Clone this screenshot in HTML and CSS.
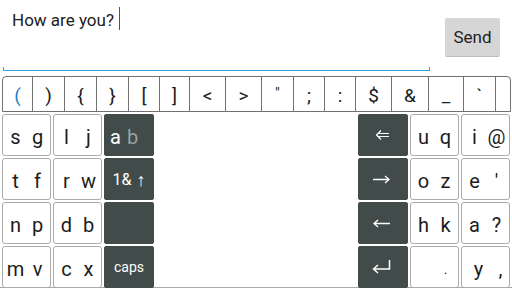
FILE: index.html
```html
<!DOCTYPE html>
<html>
<head>
<meta charset="utf-8">
<link rel="stylesheet" href="styles.css">
</head>
<body>
<div class="top">
  <div class="field">
    <div class="line"><span class="text">How are you?</span><span class="caret"></span></div>
    <div class="spacer"></div>
    <div class="underline"></div>
  </div>
  <button class="send">Send</button>
</div>
<div class="symbols">
  <div class="sym w30 blue">(</div>
  <div class="sym w32">)</div>
  <div class="sym w32">{</div>
  <div class="sym w32">}</div>
  <div class="sym w31">[</div>
  <div class="sym w30">]</div>
  <div class="sym w36">&lt;</div>
  <div class="sym w36">&gt;</div>
  <div class="sym w32 small">"</div>
  <div class="sym w31">;</div>
  <div class="sym w31">:</div>
  <div class="sym w36">$</div>
  <div class="sym w37">&amp;</div>
  <div class="sym w35">_</div>
  <div class="sym w32">`</div>
  <div class="sym last"></div>
</div>
<div class="keys">
  <div class="key"><span>s</span><span>g</span></div>
  <div class="key"><span>l</span><span>j</span></div>
  <div class="key dark tight"><span>a</span><span class="dim">b</span></div>
  <div class="blank"></div>
  <div class="key dark fn"><svg width="14" height="10" viewBox="0 0 14 10"><path d="M14 3.5H3 M14 6.5H3 M6 0.5L1.5 5L6 9.5" fill="none" stroke="#fff" stroke-width="1.2"/></svg></div>
  <div class="key"><span>u</span><span>q</span></div>
  <div class="key"><span>i</span><span>@</span></div>

  <div class="key"><span>t</span><span>f</span></div>
  <div class="key"><span>r</span><span>w</span></div>
  <div class="key dark fn sym-lbl">1&amp;<span class="up">↑</span></div>
  <div class="key dark fn"><svg width="17" height="9" viewBox="0 0 17 9"><path d="M0 4.5H16 M12 1L16 4.5L12 8" fill="none" stroke="#fff" stroke-width="1.3"/></svg></div>
  <div class="key"><span>o</span><span>z</span></div>
  <div class="key"><span>e</span><span>'</span></div>

  <div class="key"><span>n</span><span>p</span></div>
  <div class="key"><span>d</span><span>b</span></div>
  <div class="key dark"></div>
  <div class="key dark fn"><svg width="17" height="9" viewBox="0 0 17 9"><path d="M17 4.5H1 M5 1L1 4.5L5 8" fill="none" stroke="#fff" stroke-width="1.3"/></svg></div>
  <div class="key"><span>h</span><span>k</span></div>
  <div class="key"><span>a</span><span>?</span></div>

  <div class="key"><span>m</span><span>v</span></div>
  <div class="key"><span>c</span><span>x</span></div>
  <div class="key dark fn caps">caps</div>
  <div class="key dark fn"><svg width="19" height="14" viewBox="0 0 19 14"><path d="M17.5 0V9H2 M6 5L1.5 9L6 13" fill="none" stroke="#fff" stroke-width="1.5"/></svg></div>
  <div class="key"><span></span><span class="dot">.</span></div>
  <div class="key shift-y"><span>y</span><span>,</span></div>
</div>
</body>
</html>
```
FILE: styles.css
```css
* { box-sizing: border-box; }
html, body { margin: 0; padding: 0; background: #fff; }
body {
  width: 512px;
  height: 288px;
  overflow: hidden;
  font-family: Roboto, "Liberation Sans", sans-serif;
  color: #1c1c1c;
}
.top {
  display: flex;
  align-items: flex-start;
  height: 76px;
}
.field {
  width: 430px;
  height: 71px;
  display: flex;
  flex-direction: column;
}
.line {
  display: flex;
  align-items: flex-start;
  height: 23px;
  margin-top: 7px;
  padding-left: 12px;
}
.text {
  font-size: 17px;
  line-height: 20px;
  padding-top: 3px;
  color: #202020;
}
.caret {
  width: 1px;
  height: 23px;
  margin-left: 5px;
  background: #555;
}
.spacer { flex: 1; }
.underline {
  margin-left: 3px;
  height: 4px;
  border: 1px solid #33a5dc;
  border-top: none;
}
.send {
  margin: 18px 0 0 15px;
  width: 55px;
  height: 38px;
  padding: 0;
  border: none;
  border-radius: 2px;
  background: #d6d6d6;
  box-shadow: 0 1px 0 #bdbdbd;
  font-family: Roboto, "Liberation Sans", sans-serif;
  font-size: 17px;
  color: #222;
}
.symbols {
  display: flex;
  margin-left: 2px;
  width: 509px;
  height: 36px;
  border: 1px solid #707070;
  border-radius: 4px 4px 0 0;
}
.sym {
  flex: none;
  display: flex;
  align-items: center;
  justify-content: center;
  padding-top: 3px;
  border-right: 1px solid #707070;
  font-size: 19px;
  color: #1c1c1c;
}
.sym.blue { color: #1f7ec4; }
.sym.small { font-size: 15px; padding-bottom: 6px; }
.sym.last { flex: 1; border-right: none; }
.w30 { width: 30px; }
.w31 { width: 31px; }
.w32 { width: 32px; }
.w35 { width: 35px; }
.w36 { width: 36px; }
.w37 { width: 37px; }
.keys {
  display: grid;
  grid-template-columns: 49px 49px 50px 1fr 50px 49px 49px;
  grid-auto-rows: 42px;
  column-gap: 2px;
  row-gap: 2px;
  padding: 2px 2px 0 2px;
  height: 176px;
  border-bottom: 1px solid #a9a9a9;
}
.blank { grid-row: span 4; }
.key {
  display: grid;
  grid-template-columns: 22px 22px;
  justify-content: center;
  align-content: center;
  padding-top: 4px;
  border: 1px solid #ababab;
  border-radius: 3px;
  font-size: 20px;
  line-height: 23px;
  text-align: center;
  color: #1c1c1c;
}
.key.tight {
  grid-template-columns: 17px 17px;
  justify-content: start;
  padding-left: 2px;
}
.key.shift-y { grid-template-columns: 30px 14px; }
.key.dark {
  background: #414c4a;
  border-color: #414c4a;
  border-radius: 2px;
  color: #fff;
}
.key.dark .dim { color: #9aa2a0; }
.key.fn {
  display: flex;
  align-items: center;
  justify-content: center;
  padding-top: 0;
}
.key.fn svg { margin-right: 3px; }
.sym-lbl { font-size: 16px; padding-top: 1px; }
.up { font-size: 18px; margin-left: 5px; }
.caps { font-size: 14px; padding-top: 2px; }
.dot { font-size: 14px; }
```
